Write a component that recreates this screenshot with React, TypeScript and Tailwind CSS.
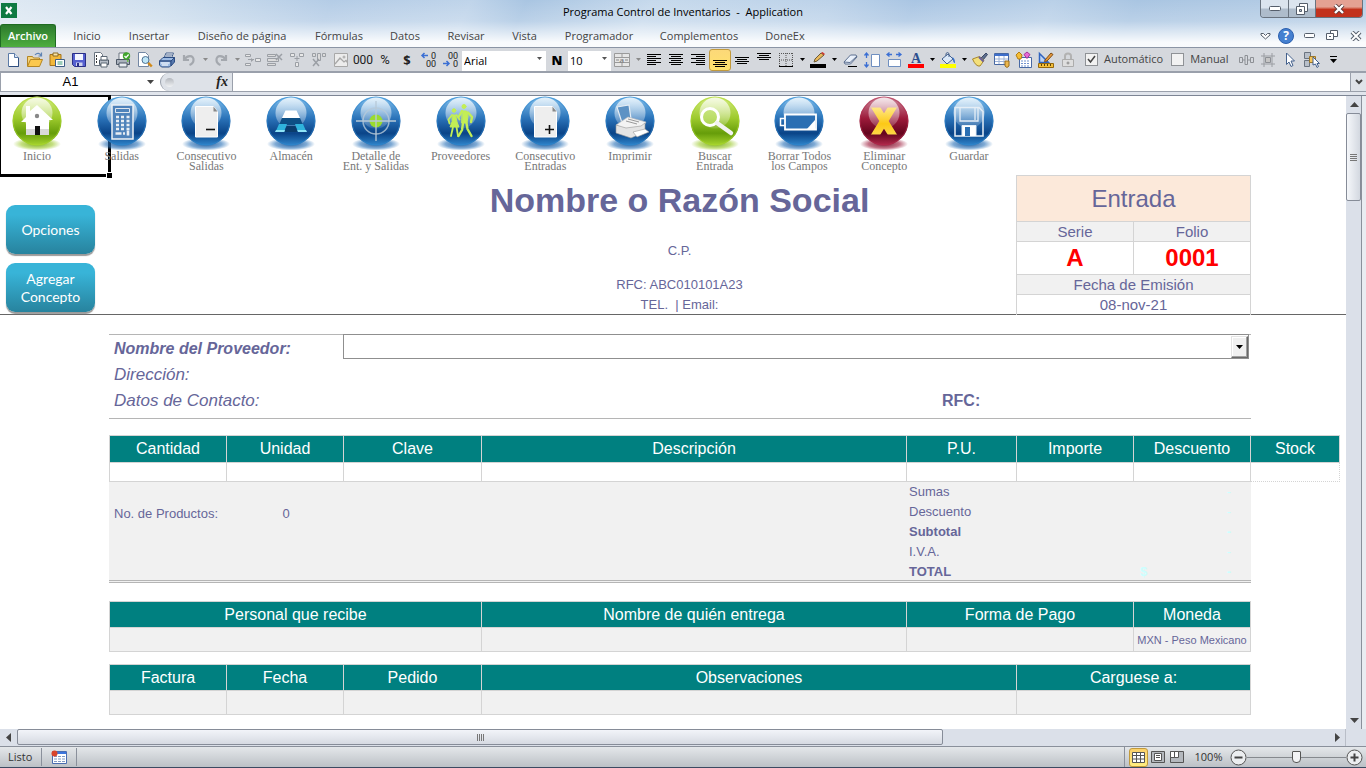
import type { ReactNode } from "react";

const TABS = [
  { label: "Inicio", width: "w-[62px]" },
  { label: "Insertar", width: "w-[62px]" },
  { label: "Diseño de página", width: "w-[124px]" },
  { label: "Fórmulas", width: "w-[70px]" },
  { label: "Datos", width: "w-[62px]" },
  { label: "Revisar", width: "w-[60px]" },
  { label: "Vista", width: "w-[57px]" },
  { label: "Programador", width: "w-[92px]" },
  { label: "Complementos", width: "w-[108px]" },
  { label: "DoneEx", width: "w-[64px]" },
];

type Tone = "blue" | "green" | "red";

const TONES: Record<Tone, { light: string; mid: string; dark: string; rim: string }> = {
  blue: { light: "#7fc0ee", mid: "#2a72b8", dark: "#0a4488", rim: "#2f86cc" },
  green: { light: "#d3ec7c", mid: "#9cc92c", dark: "#669d0a", rim: "#a8d62f" },
  red: { light: "#cf8a9d", mid: "#9c1a3a", dark: "#64041d", rim: "#b22a4c" },
};

/* ---------- Iconos de la barra ---------- */

function Icon({ children, w = 16 }: { children: ReactNode; w?: number }) {
  return (
    <svg width={w} height="16" viewBox={`0 0 ${w} 16`} fill="none" className="overflow-visible" aria-hidden="true">
      {children}
    </svg>
  );
}

function Tool({ name, active, children }: { name: string; active?: boolean; children: ReactNode }) {
  return (
    <button
      aria-label={name}
      title={name}
      className={
        active
          ? "flex h-[22px] w-[22px] items-center justify-center rounded-[3px] border border-[#c29a3c] bg-linear-to-b from-[#fcd879] to-[#ffe36c]"
          : "flex h-[22px] w-[22px] items-center justify-center"
      }
    >
      {children}
    </button>
  );
}

function Caret({ name, muted }: { name: string; muted?: boolean }) {
  return (
    <button aria-label={name} className="flex h-[22px] w-[10px] items-center justify-center">
      <svg width="5" height="3" viewBox="0 0 5 3" fill={muted ? "#8a8a8a" : "#000"} aria-hidden="true">
        <path d="M0 0h5L2.500 3z" />
      </svg>
    </button>
  );
}

function Lines({ rows, y = 1 }: { rows: number[][]; y?: number }) {
  return (
    <Icon>
      {rows.map(([x, w], i) => (
        <rect key={i} x={x} y={y + i * 2} width={w} height="1" fill="#000" shapeRendering="crispEdges" />
      ))}
    </Icon>
  );
}

const PrinterBody = () => (
  <>
    <path d="M4 7V1h8v6" fill="#fff" stroke="#6a7480" />
    <path d="M1.500 7.500h13v5h-13z" fill="#aab2bd" stroke="#4d5866" />
    <path d="M4 11h8v4H4z" fill="#e9edf2" stroke="#4d5866" />
    <path d="M12 9h1.500" stroke="#5fc02c" strokeWidth="1.500" />
  </>
);

function FileTools() {
  return (
    <div className="flex">
      <Tool name="Nuevo">
        <Icon>
          <path d="M3.500 1.500h6l4 4v9h-10z" fill="#fff" stroke="#5b7aa6" />
          <path d="M9.500 1.500v4h4" fill="#d8e4f5" stroke="#5b7aa6" />
          <path d="M13.500 6v8.500H4" stroke="#2f4f80" />
        </Icon>
      </Tool>
      <Tool name="Abrir">
        <Icon>
          <path d="M.500 14V4.500h5l1 1.500h6v2" fill="#f6d47a" stroke="#b38523" />
          <path d="M.500 14.500 3.500 7.500h12l-3 7z" fill="#fbc84d" stroke="#b38523" />
          <path d="M8 3c2-2.500 5-2 6 .5M14.500.500v3.500h-3" stroke="#5e83b3" strokeWidth="1.200" />
        </Icon>
      </Tool>
      <Tool name="Pegar">
        <Icon>
          <path d="M1 2.500h11v11H1z" fill="#f2b83b" stroke="#a4731b" />
          <path d="M4 1h5v3H4z" fill="#fbe6a9" stroke="#8b6a25" />
          <path d="M6.500 7.500h9v7h-9z" fill="#fff" stroke="#3e5d86" />
          <path d="M8.500 10h5M8.500 12h5" stroke="#3a9a76" />
        </Icon>
      </Tool>
      <Tool name="Guardar">
        <Icon>
          <path d="M1.500 1.500h13v13h-11l-2-2z" fill="#5560cf" stroke="#2a2f86" />
          <path d="M4 2h8v6H4z" fill="#f4f6ff" />
          <path d="M5 10.500h6.500V14H5z" fill="#cfd3ee" />
          <path d="M6 11h2v3H6z" fill="#2a2f86" />
        </Icon>
      </Tool>
      <Tool name="Vista previa">
        <Icon>
          <path d="M1.500.500h6l2 2v11h-8z" fill="#fff" stroke="#6a7480" />
          <path d="M3 4h2M3 7h2M3 10h2" stroke="#333" strokeDasharray="1 1" strokeWidth="2" />
          <path d="M6.500 8h9v4.500h-9z" fill="#b6bdc7" stroke="#4d5866" />
          <path d="M8 4.500h6V8H8zM8 11h6v4H8z" fill="#fff" stroke="#5c6875" />
        </Icon>
      </Tool>
      <Tool name="Impresión rápida">
        <Icon>
          <PrinterBody />
          <circle cx="11.500" cy="4" r="3.700" fill="#41a52d" />
          <path d="m9.500 4 1.500 1.600L13.600 2.500" stroke="#fff" strokeWidth="1.300" />
        </Icon>
      </Tool>
      <Tool name="Vista preliminar">
        <Icon>
          <path d="M1.500.500h7l3 3v11h-10z" fill="#fff" stroke="#7387a3" />
          <circle cx="8.500" cy="8" r="3.500" fill="#bfe6f7" stroke="#4e7193" />
          <path d="m11.200 10.800 3.600 3.700" stroke="#d18a1b" strokeWidth="2.500" />
        </Icon>
      </Tool>
      <Tool name="Imprimir">
        <Icon>
          <path d="m5 6 2-5h7.500l-2 5M7 3h6M6 5h6" fill="#fff" stroke="#44618d" />
          <path d="M.500 9 4 5.500h11.500L12 9zM.500 9H12v4.500L10.500 15h-8l-2-2z" fill="#9dbbe3" stroke="#2c4d83" />
          <path d="M2 11h8.500M3 13h6" stroke="#fff" />
          <path d="M12 9l3.500-3.500v4.500L12 14z" fill="#5678ad" stroke="#2c4d83" />
        </Icon>
      </Tool>
    </div>
  );
}

function EditTools() {
  return (
    <div className="flex items-center">
      <Tool name="Deshacer">
        <Icon>
          <path d="M3 3v5h5M3.500 7.500C6 3 13 3 12.500 8c0 2.500-1.500 4-4 5" stroke="#a4a8ae" strokeWidth="2.200" />
        </Icon>
      </Tool>
      <Caret name="Historial deshacer" muted />
      <Tool name="Rehacer">
        <Icon>
          <path d="M13 3v5H8M12.500 7.500C10 3 3 3 3.500 8c0 2.500 1.500 4 4 5" stroke="#a4a8ae" strokeWidth="2.200" />
        </Icon>
      </Tool>
      <Caret name="Historial rehacer" muted />
      <Tool name="Insertar filas">
        <Icon>
          <path d="M.500 2.500h5v2h-5zM.500 11.500h5v2h-5zM10.500 6.500h5v3h-5zM3 7.500h6" fill="#e8e8e8" stroke="#9b9fa5" />
          <path d="m6 6 2.500 2L6 10" fill="#9b9fa5" />
        </Icon>
      </Tool>
      <Tool name="Eliminar filas">
        <Icon>
          <path d="M.500 2.500h8v2h-8zM.500 11.500h8v2h-8zM.500 6.500h11v3H.500z" fill="#dcdcdc" stroke="#9b9fa5" />
          <path d="m9 2 6 6m0-6-6 6" stroke="#9b9fa5" strokeWidth="1.500" />
        </Icon>
      </Tool>
      <Tool name="Insertar columnas">
        <Icon>
          <path d="M1.500 1.500h4v3h-4zM10.500 1.500h4v3h-4zM6.500 10.500h3v4h-3z" fill="#e8e8e8" stroke="#9b9fa5" />
          <path d="M8 4v5M5.500 6.500h5" stroke="#9b9fa5" />
        </Icon>
      </Tool>
      <Tool name="Eliminar columnas">
        <Icon>
          <path d="M1.500 1.500h3v3h-3zM6.500 1.500h3v7h-3zM11.500 1.500h3v3h-3z" fill="#dcdcdc" stroke="#9b9fa5" />
          <path d="m2 7 6 7m0-7-6 7" stroke="#9b9fa5" strokeWidth="1.500" />
        </Icon>
      </Tool>
      <Tool name="Imagen">
        <Icon>
          <path d="M1.500 1.500h13v13h-13z" fill="#ececec" stroke="#a8a8a8" />
          <path d="m2 12 5-6 4 4 2-1.500 1.500 2" stroke="#a8a8a8" strokeWidth="1.300" />
          <circle cx="11" cy="5" r="1.500" fill="#b5b5b5" />
        </Icon>
      </Tool>
      <Tool name="Estilo millares">
        <span className="font-['Roboto'] text-[12px] leading-4 text-[#222]">000</span>
      </Tool>
      <Tool name="Estilo porcentual">
        <span className="font-['Roboto'] text-[13px] leading-4 text-[#222]">%</span>
      </Tool>
      <Tool name="Estilo moneda">
        <span className="font-['Open_Sans'] text-[13px] leading-4 font-bold text-[#222]">$</span>
      </Tool>
      <Tool name="Aumentar decimales">
        <Icon>
          <text x="10" y="7" fontSize="9" fill="#222" fontFamily="Roboto">0</text>
          <text x="5" y="15" fontSize="9" fill="#222" fontFamily="Roboto">00</text>
          <path d="M1 3.500h6M3.500 1 1 3.500 3.500 6" stroke="#3b6fd4" strokeWidth="1.500" />
        </Icon>
      </Tool>
      <Tool name="Disminuir decimales">
        <Icon>
          <text x="5" y="7" fontSize="9" fill="#222" fontFamily="Roboto">00</text>
          <text x="10" y="15" fontSize="9" fill="#222" fontFamily="Roboto">0</text>
          <path d="M0 11.500h6M3.500 9 6 11.500 3.500 14" stroke="#3b6fd4" strokeWidth="1.500" />
        </Icon>
      </Tool>
    </div>
  );
}

function FormatTools() {
  return (
    <div className="flex items-center">
      <div className="relative">
        <select
          aria-label="Fuente"
          className="h-5 w-[84px] appearance-none bg-white px-[2px] font-['Open_Sans'] text-[11px] text-black"
        >
          <option>Arial</option>
        </select>
        <svg className="pointer-events-none absolute top-[9px] right-1" width="5" height="3" fill="#555">
          <path d="M0 0h5L2.500 3z" />
        </svg>
      </div>
      <Tool name="Negrita">
        <span className="font-['Open_Sans'] text-[13px] leading-4 font-extrabold text-black">N</span>
      </Tool>
      <div className="relative">
        <select
          aria-label="Tamaño de fuente"
          className="h-5 w-[43px] appearance-none bg-white px-[2px] font-['Open_Sans'] text-[11px] text-black"
        >
          <option>10</option>
        </select>
        <svg className="pointer-events-none absolute top-[9px] right-1" width="5" height="3" fill="#555">
          <path d="M0 0h5L2.500 3z" />
        </svg>
      </div>
      <Tool name="Combinar y centrar">
        <Icon>
          <path d="M.500 1.500h15v13H.500zM.500 5.500h15M.500 10.500h15M8 1.500v4M8 10.500v4" fill="#e6e6e6" stroke="#9a9a9a" />
          <path d="M2 8h3M11 8h3" stroke="#8a8a8a" />
          <text x="5.500" y="11" fontSize="9" fontWeight="bold" fill="#8a8a8a" fontFamily="Liberation Serif">a</text>
        </Icon>
      </Tool>
      <Caret name="Opciones de combinar" muted />
      <Tool name="Alinear a la izquierda">
        <Lines rows={[[1, 14], [1, 9], [1, 14], [1, 9], [1, 14], [1, 9]]} y={2} />
      </Tool>
      <Tool name="Centrar">
        <Lines rows={[[1, 14], [3, 10], [1, 14], [3, 10], [1, 14], [3, 10]]} y={2} />
      </Tool>
      <Tool name="Alinear a la derecha">
        <Lines rows={[[1, 14], [6, 9], [1, 14], [6, 9], [1, 14], [6, 9]]} y={2} />
      </Tool>
      <Tool name="Alinear en la parte inferior" active>
        <Lines rows={[[1, 14], [3, 10], [1, 14], [3, 10]]} y={8} />
      </Tool>
      <Tool name="Alinear en el medio">
        <Lines rows={[[1, 14], [3, 10], [1, 14], [3, 10]]} y={5} />
      </Tool>
      <Tool name="Alinear en la parte superior">
        <Lines rows={[[1, 14], [3, 10], [1, 14], [3, 10]]} y={1} />
      </Tool>
      <Tool name="Bordes">
        <Icon>
          <path d="M1.500 1v13M8 1v13M14.500 1v13M1 1.500h14M1 8h14" stroke="#555" strokeDasharray="1 1" />
          <path d="M1 14.500h14" stroke="#000" />
        </Icon>
      </Tool>
      <Caret name="Más bordes" />
      <Tool name="Color de línea">
        <Icon>
          <path d="m4 10 1-3 6-6 3 2-7 6z" fill="#e9b95c" stroke="#6d5a36" />
          <path d="m11 1 3 2 1-1-2.500-2z" fill="#d0342c" />
          <path d="M0 12h16v4H0z" fill="#000" />
        </Icon>
      </Tool>
      <Caret name="Más colores de línea" />
      <Tool name="Borrar">
        <Icon>
          <path d="m2 10 6.500-7h5.500l1 2-6.500 7H3z" fill="#eaf1fb" stroke="#5d7090" />
          <path d="m2 10 6 .5L15 4" stroke="#5d7090" />
          <path d="M6 14.500h9" stroke="#000" />
        </Icon>
      </Tool>
      <Tool name="Alto de fila">
        <Icon>
          <path d="M7.500 2.500h8v12h-8z" fill="#fff" stroke="#6f8fc0" />
          <path d="M2.500 1v5M2.500 15v-5M.500 3.500l2-2.500 2 2.500M.500 12.500l2 2.500 2-2.500" stroke="#3b6fd4" strokeWidth="1.300" />
        </Icon>
      </Tool>
      <Tool name="Ancho de columna">
        <Icon>
          <path d="M2.500 7.500h12v7h-12z" fill="#fff" stroke="#6f8fc0" />
          <path d="M1 2.500h5M15 2.500h-5M3.500.500 1 2.500l2.500 2M12.500.500l2.500 2-2.500 2" stroke="#3b6fd4" strokeWidth="1.300" />
        </Icon>
      </Tool>
      <Tool name="Color de fuente">
        <Icon>
          <text x="3" y="11" fontSize="14" fontWeight="bold" fill="#2d4f8f" fontFamily="Liberation Serif">A</text>
          <path d="M0 12h16v4H0z" fill="#f00" />
        </Icon>
      </Tool>
      <Caret name="Más colores de fuente" />
      <Tool name="Color de relleno">
        <Icon>
          <path d="m2 7 6-5 5 5-6 5z" fill="#dce9f8" stroke="#44618d" />
          <path d="M6 4V1.500q1.500-2 3 0V5" stroke="#44618d" />
          <path d="M12 5q3 1 3 6-2 0-2-4z" fill="#2f6fd0" />
          <path d="M0 12h16v4H0z" fill="#ff0" />
        </Icon>
      </Tool>
      <Caret name="Más colores de relleno" />
      <Tool name="Copiar formato">
        <Icon>
          <path d="m9 6 5-5 1.500 1.500L11 8z" fill="#5d6d8d" stroke="#3a4a68" />
          <path d="m.500 7 7-2.500 4.500 4L8 14q-4 1-7.500-7z" fill="#f3df7a" stroke="#a8872b" />
          <path d="m7 5 4.500 4.500" stroke="#6a5f9c" strokeWidth="2" />
        </Icon>
      </Tool>
      <Tool name="Dar formato como tabla">
        <Icon>
          <path d="M.500 1.500h14v11H.500z" fill="#fff" stroke="#4768a3" />
          <path d="M.500 2h14v2H.500z" fill="#3f6fcb" />
          <path d="M1 7h13M1 9.500h13M5 4v8M10 4v8" stroke="#9db2d6" />
          <path d="M11 9h4v5l-2 1.500-2-1.500z" fill="#edb84e" stroke="#9c6f1c" />
        </Icon>
      </Tool>
      <Tool name="Estilos">
        <Icon>
          <path d="M3.500 5.500h12v10h-12z" fill="#fff" stroke="#4768a3" />
          <path d="M5 9h9M5 11.500h9M5 14h9" stroke="#6f91ce" strokeDasharray="2 1" />
          <path d="m3 0 3 3-1 4H2L0 3z" fill="#f5bd35" stroke="#b27d12" />
          <path d="m11 0 3 2.500-3 4-3-4z" fill="#e66ad6" stroke="#a8339b" />
        </Icon>
      </Tool>
      <Tool name="Modo diseño">
        <Icon>
          <path d="M1.500 1.500v9h9z" fill="#bcd3f4" stroke="#2f63c0" strokeWidth="1.500" />
          <path d="m7 8 6-7 2 1.500L9 9l-2.500.500z" fill="#e99a3c" stroke="#7d4d16" />
          <path d="M.500 11.500h15v4H.500z" fill="#f4bf3a" stroke="#94690f" />
          <path d="M3.500 12v2M6.500 12v2M9.500 12v2M12.500 12v2" stroke="#5e4307" />
        </Icon>
      </Tool>
      <Tool name="Bloquear celda">
        <Icon>
          <path d="M5 7V4q0-2.500 3-2.500T11 4v3" stroke="#b2b2b2" strokeWidth="2" />
          <path d="M2.500 7.500h11v7h-11z" fill="#dedede" stroke="#acacac" />
          <path d="M8 9.500v3M6.500 11h3" stroke="#888" />
        </Icon>
      </Tool>
    </div>
  );
}

function Toolbar() {
  return (
    <div className="flex h-[26px] items-center overflow-hidden border-t border-b-2 border-t-[#8b95a5] border-b-[#9aa0ab] bg-[#d5d8dd] px-[2px]">
      <FileTools />
      <EditTools />
      <FormatTools />
      <div className="ml-[6px] flex items-center gap-[8px] font-['Open_Sans'] text-[11px] text-[#444]">
        <label className="flex items-center gap-[6px]">
          <input
            type="checkbox"
            defaultChecked
            className="peer h-[13px] w-[13px] appearance-none border border-[#8f9296] bg-[#f2f2f2] checked:bg-[url('data:image/svg+xml,%3Csvg%20xmlns=%22http://www.w3.org/2000/svg%22%20viewBox=%220%200%2011%2011%22%3E%3Cpath%20d=%22M2%205l2.500%203L9%202%22%20fill=%22none%22%20stroke=%22%23444%22%20stroke-width=%221.500%22/%3E%3C/svg%3E')]"
          />
          Automático
        </label>
        <label className="flex items-center gap-[6px]">
          <input type="checkbox" className="h-[13px] w-[13px] appearance-none border border-[#8f9296] bg-[#f2f2f2]" />
          Manual
        </label>
      </div>
      <div className="ml-[6px] flex items-center">
        <Tool name="Distribuir">
          <Icon>
            <path d="M1.500 5.500h3v5h-3zM7 3.500h2.500v9H7zM12.500 5.500h3v5h-3zM4.500 8H7M10 8h2.500" stroke="#8d9095" />
          </Icon>
        </Tool>
        <Tool name="Recortar">
          <Icon>
            <path d="M4 1v14M12 1v14M1 4h14M1 12h14" stroke="#9a9da2" />
            <path d="M5.500 5.500h5v5h-5z" fill="#c5c5c5" stroke="#8d9095" />
          </Icon>
        </Tool>
        <Tool name="Seleccionar">
          <Icon>
            <path d="m4.500 1 8 8H9l2 4.500-2 1L7 10l-2.500 2.500z" fill="#fff" stroke="#44618d" />
          </Icon>
        </Tool>
        <Tool name="Panel de selección">
          <Icon>
            <path d="M.500.500h6v6h-6zM.500 8.500h5v6h-5z" fill="#b9c0c9" stroke="#6b7480" />
            <path d="M5.500 4.500h6v6h-6z" fill="#f5c45b" stroke="#9d7727" />
            <path d="m9 5 6.500 6.500H13l1.500 3-1.500 1-1.500-3.500L9 13z" fill="#fff" stroke="#44618d" />
          </Icon>
        </Tool>
        <Tool name="Personalizar">
          <svg width="7" height="8" viewBox="0 0 7 8" aria-hidden="true">
            <path d="M0 0h7v1H0zM0 3h7L3.500 7z" />
          </svg>
        </Tool>
      </div>
    </div>
  );
}

/* ---------- Ventana ---------- */

function TitleBar() {
  return (
    <header className="relative bg-[linear-gradient(to_bottom,rgba(255,255,255,0)_0%,rgba(255,255,255,.2)_45%,rgba(255,255,255,.92)_90%),linear-gradient(115deg,#dfe9f3_0%,#cfdfee_12%,#b4cce6_24%,#bfd4ea_34%,#a9c5e2_38%,#c6d9ec_47%,#bcd2e9_60%,#a9c5e3_66%,#b9d0e8_76%,#a9c5e2_82%,#b9cfe6_100%)]">
      <div className="relative flex h-6 items-center justify-center">
        <svg className="absolute top-[3px] left-px" width="16" height="15" viewBox="0 0 16 15" aria-hidden="true">
          <path d="M0 0h16v15H0z" fill="#0f7a42" />
          <path d="m5 4 5.500 7M10.500 4 5 11" stroke="#fff" strokeWidth="2.200" />
        </svg>
        <h1 className="font-['Open_Sans'] text-[11px] leading-4 whitespace-pre text-black">
          Programa Control de Inventarios  -  Application
        </h1>
        <div className="absolute top-0 right-[3px] flex h-[18px] overflow-hidden rounded-b-[4px] border border-t-0 border-[#69737f]">
          <button aria-label="Minimizar" className="flex w-7 items-center justify-center border-r border-[#69737f] bg-linear-to-b from-[#dbe4ee] from-45% to-[#aebccb] to-55%">
            <svg width="12" height="5" aria-hidden="true">
              <rect x=".5" y=".5" width="11" height="4" rx="1" fill="#fff" stroke="#555e6b" />
            </svg>
          </button>
          <button aria-label="Restaurar" className="flex w-[27px] items-center justify-center border-r border-[#69737f] bg-linear-to-b from-[#dbe4ee] from-45% to-[#aebccb] to-55%">
            <svg width="13" height="12" fill="#fff" stroke="#555e6b" aria-hidden="true">
              <path d="M3.500.500h8v8h-8z" />
              <path d="M.500 3.500h8v8h-8z" />
              <path d="M3.500 6.500h2v2h-2z" fill="#b9c4d0" />
            </svg>
          </button>
          <button aria-label="Cerrar" className="flex w-[46px] items-center justify-center bg-linear-to-b from-[#e4a193] from-40% to-[#c2321d] to-55%">
            <svg width="12" height="10" aria-hidden="true">
              <path d="m2 1 8 8M10 1 2 9" stroke="#5a3a3a" strokeWidth="4" />
              <path d="m2 1 8 8M10 1 2 9" stroke="#fff" strokeWidth="2.400" />
            </svg>
          </button>
        </div>
      </div>
      <nav className="flex h-[23px] items-stretch font-['Open_Sans'] text-[11px] text-[#444]">
        <button className="w-14 rounded-t-[3px] border border-b-0 border-[#1f6b22] bg-linear-to-b from-[#2c7a2d] to-[#4fae3f] font-semibold text-white">
          Archivo
        </button>
        {TABS.map((tab) => (
          <button key={tab.label} className={`${tab.width} pt-[2px] whitespace-nowrap`}>
            {tab.label}
          </button>
        ))}
        <div className="ml-auto flex items-center gap-[7px] pr-1">
          <button aria-label="Minimizar la cinta">
            <svg width="11" height="8" aria-hidden="true">
              <path d="M1 1.500h2.500l2 2 2-2H10v1.500L5.500 7 1 3z" fill="#fff" stroke="#555e6b" />
            </svg>
          </button>
          <button aria-label="Ayuda" className="h-4 w-4 rounded-full border border-[#2b5fae] bg-[#4580d0] text-[12px] leading-[14px] font-bold text-white">
            ?
          </button>
          <button aria-label="Minimizar libro" className="w-[18px] pl-[3px]">
            <svg width="12" height="6" aria-hidden="true">
              <rect x=".5" y=".5" width="10" height="4" rx="1" fill="#fff" stroke="#555e6b" />
            </svg>
          </button>
          <button aria-label="Restaurar libro">
            <svg width="13" height="11" fill="#fff" stroke="#555e6b" aria-hidden="true">
              <path d="M4.500.500h7v6h-7z" />
              <path d="M.500 3.500h7v6h-7z" />
              <path d="M3 6.500h2" />
            </svg>
          </button>
          <button aria-label="Cerrar libro" className="pl-1">
            <svg width="12" height="10" aria-hidden="true">
              <path d="m2 1 8 8M10 1 2 9" stroke="#555e6b" strokeWidth="4" />
              <path d="m2 1 8 8M10 1 2 9" stroke="#fff" strokeWidth="2" />
            </svg>
          </button>
        </div>
      </nav>
    </header>
  );
}

function FormulaBar() {
  return (
    <div className="border-b border-[#7d8594] bg-[#e1e5ec] pb-[3px]">
      <div className="flex h-[19px] border-b border-[#9aa0ab] bg-white">
        <div className="flex w-40 items-center border-l border-[#9aa0ab] pr-[6px]">
          <input
            aria-label="Cuadro de nombres"
            defaultValue="A1"
            className="w-[139px] bg-transparent text-center text-[13px] leading-4 text-black outline-none"
          />
          <svg className="ml-auto" width="7" height="4" fill="#444" aria-hidden="true">
            <path d="M0 0h7L3.500 4z" />
          </svg>
        </div>
        <div className="flex w-[73px] items-center justify-between rounded-l-[9px] border-r border-l border-[#9aa0ab] bg-[#dee2e8] px-1">
          <span className="h-[9px] w-[9px] rounded-full bg-linear-to-b from-[#b4b8be] to-[#f0f2f4]" />
          <button aria-label="Insertar función" className="font-['Liberation_Serif'] text-[14px] leading-4 font-bold text-[#222] italic">
            fx
          </button>
        </div>
        <input aria-label="Barra de fórmulas" className="min-w-0 flex-1 px-1 text-[13px] outline-none" />
        <button aria-label="Expandir barra de fórmulas" className="flex w-4 items-center justify-center border-l border-[#9aa0ab] bg-[#dfe3e9]">
          <svg width="8" height="6" fill="none" stroke="#444" strokeWidth="2" aria-hidden="true">
            <path d="m1 1 3 3 3-3" />
          </svg>
        </button>
      </div>
    </div>
  );
}

/* ---------- Botones esfera ---------- */

function Orb({ tone, children }: { tone: Tone; children: ReactNode }) {
  const c = TONES[tone];
  return (
    <svg width="62" height="55" viewBox="0 0 62 55" fill="none" aria-hidden="true">
      <defs>
        <linearGradient id={`body-${tone}`} x1="0" y1="0" x2="0" y2="1">
          <stop offset="0" stopColor={c.light} />
          <stop offset=".45" stopColor={c.mid} />
          <stop offset=".75" stopColor={c.dark} />
          <stop offset="1" stopColor={c.rim} />
        </linearGradient>
        <linearGradient id={`gloss-${tone}`} x1="0" y1="0" x2="0" y2="1">
          <stop offset="0" stopColor="#fff" stopOpacity=".8" />
          <stop offset="1" stopColor="#fff" stopOpacity=".12" />
        </linearGradient>
        <radialGradient id={`shade-${tone}`}>
          <stop offset="0" stopColor={c.dark} stopOpacity=".9" />
          <stop offset=".65" stopColor={c.mid} stopOpacity=".6" />
          <stop offset="1" stopColor={c.mid} stopOpacity="0" />
        </radialGradient>
      </defs>
      <ellipse cx="31" cy="48" rx="24" ry="6.500" fill={`url(#shade-${tone})`} />
      <circle cx="31" cy="25" r="24.500" fill={`url(#body-${tone})`} />
      <circle cx="31" cy="25" r="23.800" stroke={c.rim} strokeOpacity=".6" />
      <circle cx="31" cy="17" r="15.500" fill={`url(#gloss-${tone})`} />
      {children}
    </svg>
  );
}

const Sheet = ({ children }: { children: ReactNode }) => (
  <>
    <path d="M20.500 10.500h18l4 5v25.500h-22z" fill="#eee" stroke="#fff" />
    <path d="M38.500 10.500v5h4z" fill="#888" />
    {children}
  </>
);

const ORBS: { label: string; tone: Tone; art: ReactNode }[] = [
  {
    label: "Inicio",
    tone: "green",
    art: (
      <>
        <path d="M20 10h4v5l7-6 16 15h-4v15H20V26h-5l5-5z" fill="#fff" />
        <path d="M20 33h23v6H20z" fill="#d9d9d9" />
        <path d="M29 30h5v9h-5z" fill="#111" />
        <circle cx="31" cy="20" r="2.200" fill="#888" />
      </>
    ),
  },
  {
    label: "Salidas",
    tone: "blue",
    art: (
      <>
        <path d="M21 9h21v34H21z" fill="#4f83bb" stroke="#eef2f6" strokeWidth="1.500" />
        <path d="M24.500 12.500h14v4h-14z" stroke="#dfe6ee" />
        <path d="M25 21h3M30 21h3M35.500 21h3M25 25h3M30 25h3M35.500 25h3M25 29h3M30 29h3M35.500 29h3M25 33h3M30 33h3M35.500 33h3M24.500 37.500h6M32 37.500h2" stroke="#e9eef4" strokeWidth="2.600" />
        <path d="M37 34.500v5" stroke="#e9eef4" strokeWidth="2.600" />
      </>
    ),
  },
  {
    label: "Consecutivo\nSalidas",
    tone: "blue",
    art: (
      <Sheet>
        <path d="M31 33.500h9" stroke="#111" strokeWidth="1.600" />
      </Sheet>
    ),
  },
  {
    label: "Almacén",
    tone: "blue",
    art: (
      <>
        <path d="M25.500 14.500h11l3.500 7.500H22z" fill="#fff" />
        <path d="M22 22h18l3 7H19z" fill="#0d4f85" />
        <path d="M19 28h8l-3 8h-8.500zM35 28h8l3.500 8H38z" fill="#2fb3dc" />
        <path d="M26.500 30h9l2 6h-13z" fill="#0a3c6c" />
        <path d="M16 34h9l-.700 2h-9.300zM37.300 34h8.700l1 2h-9z" fill="#8fe3f6" />
      </>
    ),
  },
  {
    label: "Detalle de\nEnt. y Salidas",
    tone: "blue",
    art: (
      <>
        <circle cx="31" cy="25" r="6.500" fill="#9adb2e" />
        <circle cx="31" cy="25" r="13" stroke="#b7c9d8" strokeOpacity=".8" strokeWidth="1.500" />
        <path d="M31 5v40M11 25h40" stroke="#b7c9d8" strokeWidth="1.300" />
      </>
    ),
  },
  {
    label: "Proveedores",
    tone: "blue",
    art: (
      <g fill="#c3ee55" stroke="#c3ee55" strokeLinejoin="round" strokeLinecap="round">
        <circle cx="24" cy="14.500" r="1.800" />
        <circle cx="34" cy="10.500" r="2" />
        <path d="m22.500 19 3 0 1.500 7 2 5h-9l2-5z" />
        <path d="m22 19-3.500 4.500 1 4M26.500 19l3 4.500M23 31l-2 9M26.500 31l1.500 9" fill="none" strokeWidth="1.800" />
        <path d="m32.500 15 4 0 1.500 5-1 7h-5z" />
        <path d="m32 15-3.500 6M38 16.500l4 4.500-1 5M33 27l-1 7-3.500 6M36.500 27l1 6 4 7" fill="none" strokeWidth="2.400" />
      </g>
    ),
  },
  {
    label: "Consecutivo\nEntradas",
    tone: "blue",
    art: (
      <Sheet>
        <path d="M31 33.500h9M35.500 29v9" stroke="#111" strokeWidth="1.600" />
      </Sheet>
    ),
  },
  {
    label: "Imprimir",
    tone: "blue",
    art: (
      <>
        <path d="m18 11 12-2 2 14-9 4z" fill="#5d92c4" stroke="#e6edf4" strokeWidth="1.200" />
        <path d="m17 29 12-8 18 5-5 9-18-3z" fill="#f3f3f3" stroke="#bbb" strokeWidth=".6" />
        <path d="m17 29 10 3 15-2 4-3v9l-14 6-15-5z" fill="#e4e4e4" stroke="#999" strokeWidth=".6" />
        <path d="m29 23 11 3M27 25l11 3" stroke="#999" />
        <path d="m34 36 12-3 4 3-12 5z" fill="#fff" stroke="#999" strokeWidth=".6" />
      </>
    ),
  },
  {
    label: "Buscar\nEntrada",
    tone: "green",
    art: (
      <>
        <circle cx="26" cy="21" r="8.500" fill="#b7dd5c" fillOpacity=".6" stroke="#fff" strokeWidth="3" />
        <path d="m33 27 14 10" stroke="#f2f2f2" strokeWidth="4.500" strokeLinecap="round" />
      </>
    ),
  },
  {
    label: "Borrar Todos\nlos Campos",
    tone: "blue",
    art: (
      <>
        <path d="M17 18.500h31v15H17z" fill="#2b6fb3" stroke="#fff" strokeWidth="1.800" />
        <path d="M16.500 22.500h-4v7h4" stroke="#fff" strokeWidth="1.500" />
        <path d="M47 24v9h-8z" fill="#fff" />
      </>
    ),
  },
  {
    label: "Eliminar\nConcepto",
    tone: "red",
    art: (
      <>
        <defs>
          <clipPath id="cross-clip">
            <path d="M14 11.500h34v27H14z" />
          </clipPath>
          <linearGradient id="cross-fill" gradientUnits="userSpaceOnUse" x1="0" y1="11" x2="0" y2="39">
            <stop offset="0" stopColor="#ffe98a" />
            <stop offset=".6" stopColor="#fcc916" />
            <stop offset="1" stopColor="#fdd74a" />
          </linearGradient>
        </defs>
        <path d="m20 7 22 36M42 7 20 43" stroke="url(#cross-fill)" strokeWidth="8" clipPath="url(#cross-clip)" />
      </>
    ),
  },
  {
    label: "Guardar",
    tone: "blue",
    art: (
      <>
        <path d="M17 11.500h24l4 4V40H17z" stroke="#e6eef6" strokeWidth="1.500" />
        <path d="M22 12v13h18V12M37 12v12" stroke="#e6eef6" strokeWidth="1.300" />
        <path d="M24 40V29.500h14V40" fill="#fff" stroke="#e6eef6" />
        <path d="M27 31h5v9h-5z" fill="#2b6fb3" />
      </>
    ),
  },
];

function OrbMenu() {
  return (
    <div className="relative h-[79px]">
      {/* Celda A1 seleccionada, queda por debajo de los botones */}
      <div className="absolute top-[-1px] left-0 h-[82px] w-[111px] border-2 border-r-3 border-b-3 border-l-1 border-black">
        <span className="absolute -right-[4px] -bottom-[4px] h-[6px] w-[6px] border-t border-l border-white bg-black" />
      </div>
      <div className="relative flex w-[1006px] justify-between">
        {ORBS.map((orb) => (
          <button
            key={orb.label}
            className="flex w-[74px] flex-col items-center font-['Liberation_Serif'] text-[12px] leading-[10px] whitespace-pre text-[#777]"
          >
            <Orb tone={orb.tone}>{orb.art}</Orb>
            {orb.label}
          </button>
        ))}
      </div>
    </div>
  );
}

/* ---------- Hoja ---------- */

const SIDE_BUTTON =
  "flex h-[49px] w-[89px] items-center justify-center rounded-[9px] bg-linear-to-b from-[#38b4d8] from-20% to-[#27839e] px-2 text-center text-[14px] leading-[18px] text-white shadow-[0_2px_1px_#9a9a9a]";

function DocumentHeader() {
  return (
    <section className="grid h-[139px] grid-cols-[109px_234px_minmax(0,1fr)_235px_95px]">
      <div className="flex flex-col gap-[9px] pt-[30px] pl-[6px] font-['Lato','Open_Sans']">
        <button className={SIDE_BUTTON}>Opciones</button>
        <button className={SIDE_BUTTON}>Agregar Concepto</button>
      </div>
      <div className="col-start-3 text-center text-[13px] leading-5">
        <h2 className="text-[34px] leading-[50px] font-bold">Nombre o Razón Social</h2>
        <p className="mt-4">C.P.</p>
        <p className="mt-[14px]">RFC: ABC010101A23</p>
        <p className="whitespace-pre">TEL.  | Email:</p>
      </div>
      <table className="h-[139px] w-full table-fixed border-collapse text-center text-[15px] leading-[18px] [&_td]:border [&_td]:border-[#d4d4d4] [&_td]:p-0 [&_th]:border [&_th]:border-[#d4d4d4] [&_th]:p-0 [&_th]:font-normal">
        <tbody>
          <tr className="h-[46px] bg-[#fce9da]">
            <th colSpan={2} className="text-[24px]">Entrada</th>
          </tr>
          <tr className="h-5 bg-[#f1f1f1]">
            <th>Serie</th>
            <th>Folio</th>
          </tr>
          <tr className="h-[33px] text-[24px] font-bold text-[#ff0000]">
            <td>A</td>
            <td>0001</td>
          </tr>
          <tr className="h-5 bg-[#f1f1f1]">
            <th colSpan={2}>Fecha de Emisión</th>
          </tr>
          <tr className="h-5">
            <td colSpan={2} className="border-b-0!">08-nov-21</td>
          </tr>
        </tbody>
      </table>
    </section>
  );
}

function Supplier() {
  return (
    <section className="mt-[19px] mr-[95px] ml-[109px] h-[85px] border-y border-[#b5b5b5] pt-px text-[17px] leading-[26px] italic">
      <div className="flex">
        <label htmlFor="proveedor" className="w-[234px] pl-[5px] text-[16px] font-bold">
          Nombre del Proveedor:
        </label>
        <div className="relative -mt-[2px] mr-[2px] h-[25px] flex-1">
          <select id="proveedor" className="h-full w-full appearance-none border border-[#8f8f8f] bg-white px-1">
            <option></option>
          </select>
          <span className="pointer-events-none absolute top-[2px] right-px flex h-[22px] w-[17px] items-center justify-center border border-t-[#e3e3e3] border-r-[#696969] border-b-[#696969] border-l-[#e3e3e3] bg-[#f0f0f0] shadow-[inset_-1px_-1px_0_#a0a0a0,inset_1px_1px_0_#fff]">
            <svg width="7" height="4">
              <path d="M0 0h7L3.500 4z" />
            </svg>
          </span>
        </div>
      </div>
      <p className="pl-[5px]">Dirección:</p>
      <div className="flex">
        <p className="flex-1 pl-[5px]">Datos de Contacto:</p>
        <p className="w-[309px] text-[16px] font-bold not-italic">RFC:</p>
      </div>
    </section>
  );
}

const TABLE =
  "w-full table-fixed border-collapse text-center text-[16px] leading-5 [&_td]:border [&_td]:border-[#d4d4d4] [&_td]:p-0 [&_th]:border [&_th]:border-[#d4d4d4] [&_th]:bg-[#008080] [&_th]:p-0 [&_th]:font-normal [&_th]:text-white";

const TOTALS = [
  { label: "Sumas", strong: false },
  { label: "Descuento", strong: false },
  { label: "Subtotal", strong: true },
  { label: "I.V.A.", strong: false },
  { label: "TOTAL", strong: true },
];

function Items() {
  return (
    <>
      <div className="mt-4 mr-[6px] ml-[109px]">
        <table className={TABLE}>
          <colgroup>
            <col className="w-[117px]" />
            <col className="w-[117px]" />
            <col className="w-[138px]" />
            <col />
            <col className="w-[110px]" />
            <col className="w-[117px]" />
            <col className="w-[117px]" />
            <col className="w-[89px]" />
          </colgroup>
          <thead>
            <tr className="h-[27px]">
              {["Cantidad", "Unidad", "Clave", "Descripción", "P.U.", "Importe", "Descuento", "Stock"].map((h) => (
                <th key={h}>{h}</th>
              ))}
            </tr>
          </thead>
          <tbody>
            <tr className="h-[19px]">
              <td />
              <td />
              <td />
              <td />
              <td />
              <td />
              <td />
              <td className="[border-style:solid_dotted_dotted_solid]!" />
            </tr>
          </tbody>
        </table>
      </div>
      <div className="mr-[95px] ml-[109px] flex h-[101px] justify-between border-b-3 border-double border-[#b5b5b5] bg-[#f1f1f1] text-[13px] leading-5">
        <dl className="flex pt-[22px] pl-[5px]">
          <dt className="w-[163px]">No. de Productos:</dt>
          <dd className="w-[18px] text-center">0</dd>
        </dl>
        <dl className="w-[344px] pl-[2px]">
          {TOTALS.map((t) => (
            <div key={t.label} className={t.strong ? "flex font-bold" : "flex"}>
              <dt className="w-[231px]">{t.label}</dt>
              <dd className="flex flex-1 justify-between pr-5 text-[#ccffff]">
                <span>{t.label === "TOTAL" ? "$" : ""}</span>
                <span>-</span>
              </dd>
            </div>
          ))}
        </dl>
      </div>
    </>
  );
}

function Footer() {
  return (
    <div className="mt-[18px] mr-[95px] ml-[109px] flex flex-col gap-3">
      <table className={TABLE}>
        <colgroup>
          <col className="w-[372px]" />
          <col />
          <col className="w-[227px]" />
          <col className="w-[117px]" />
        </colgroup>
        <thead>
          <tr className="h-[26px]">
            <th>Personal que recibe</th>
            <th>Nombre de quién entrega</th>
            <th>Forma de Pago</th>
            <th>Moneda</th>
          </tr>
        </thead>
        <tbody>
          <tr className="h-6 bg-[#f1f1f1]">
            <td />
            <td />
            <td />
            <td className="text-[11px] whitespace-nowrap">MXN - Peso Mexicano</td>
          </tr>
        </tbody>
      </table>
      <table className={TABLE}>
        <colgroup>
          <col className="w-[117px]" />
          <col className="w-[117px]" />
          <col className="w-[138px]" />
          <col />
          <col className="w-[234px]" />
        </colgroup>
        <thead>
          <tr className="h-[26px]">
            <th>Factura</th>
            <th>Fecha</th>
            <th>Pedido</th>
            <th>Observaciones</th>
            <th>Carguese a:</th>
          </tr>
        </thead>
        <tbody>
          <tr className="h-6 bg-[#f1f1f1]">
            <td />
            <td />
            <td />
            <td />
            <td />
          </tr>
        </tbody>
      </table>
    </div>
  );
}

function VerticalScroll() {
  return (
    <div className="flex w-5 flex-col items-stretch border-r-4 border-[#e9ecf1] bg-[#dbe0e9] shadow-[inset_-1px_0_0_#8a909b]">
      <button aria-label="Desplazar arriba" className="flex h-[17px] items-center justify-center">
        <svg width="9" height="5" fill="#444">
          <path d="M0 5h9L4.500 0z" />
        </svg>
      </button>
      <div className="flex h-[88px] w-[15px] flex-col items-center justify-center gap-px rounded-[2px] border border-[#868c98] bg-linear-to-r from-[#f5f7fa] to-[#d3d8e0]">
        <span className="h-px w-[7px] bg-[#777]" />
        <span className="h-px w-[7px] bg-[#777]" />
        <span className="h-px w-[7px] bg-[#777]" />
        <span className="h-px w-[7px] bg-[#777]" />
      </div>
      <button aria-label="Desplazar abajo" className="mt-auto flex h-[17px] items-center justify-center">
        <svg width="9" height="5" fill="#444">
          <path d="M0 0h9L4.500 5z" />
        </svg>
      </button>
    </div>
  );
}

function HorizontalScroll() {
  return (
    <div className="flex h-[17px] bg-[#dbe0e9] pr-5">
      <button aria-label="Desplazar a la izquierda" className="flex w-[17px] items-center justify-center">
        <svg width="5" height="9" fill="#444">
          <path d="M5 0v9L0 4.500z" />
        </svg>
      </button>
      <div className="flex h-4 w-[926px] items-center justify-center gap-px rounded-[2px] border border-[#868c98] bg-linear-to-b from-[#f2f4f9] to-[#d6dae2]">
        <span className="h-[7px] w-px bg-[#777]" />
        <span className="h-[7px] w-px bg-[#777]" />
        <span className="h-[7px] w-px bg-[#777]" />
        <span className="h-[7px] w-px bg-[#777]" />
      </div>
      <button aria-label="Desplazar a la derecha" className="ml-auto flex w-[17px] items-center justify-center border-r border-[#b9bec8]">
        <svg width="5" height="9" fill="#444">
          <path d="M0 0v9l5-4.500z" />
        </svg>
      </button>
    </div>
  );
}

function StatusBar() {
  return (
    <footer className="flex h-[22px] items-center border-t border-b border-t-[#8a909b] border-b-[#3c4a61] bg-linear-to-b from-[#e4e7ea] to-[#bcc1c6] font-['Open_Sans'] text-[11px] text-[#333]">
      <span className="w-[41px] pl-2">Listo</span>
      <span className="h-[18px] w-px bg-[#8a909b]" />
      <button aria-label="Grabar macro" className="flex w-[34px] justify-center">
        <svg width="16" height="14" viewBox="0 0 16 14">
          <path d="M1.500 1.500h14v12h-14z" fill="#fff" stroke="#4a6db0" />
          <path d="M2 2h13v2H2z" fill="#3c75dd" />
          <path d="M3 6.500h11M3 9h11M3 11.500h11" stroke="#8099c4" strokeDasharray="3 1" />
          <circle cx="3.500" cy="3.500" r="3" fill="#d9442b" />
        </svg>
      </button>
      <span className="h-[18px] w-px bg-[#8a909b]" />
      <div className="ml-auto flex h-full items-center border-l border-[#8a909b] pl-1">
        <button aria-label="Normal" className="flex h-[19px] w-[19px] items-center justify-center rounded-[3px] border border-[#c29a3c] bg-linear-to-b from-[#fbd06a] to-[#ffee80]">
          <svg width="13" height="11" fill="#fff" stroke="#555">
            <path d="M.500.500h12v10H.500zM.500 3.500h12M.500 7h12M4.500.500v10M8.500.500v10" />
          </svg>
        </button>
        <button aria-label="Diseño de página" className="flex w-[19px] justify-center">
          <svg width="14" height="12" fill="#b4b8bd" stroke="#555">
            <path d="M.500.500h13v11H.500z" />
            <path d="M3.500 2.500h7v7h-7z" fill="#fff" />
            <path d="M5 4.500h4M5 6.500h4" />
          </svg>
        </button>
        <button aria-label="Vista previa de salto de página" className="flex w-[19px] justify-center">
          <svg width="14" height="12" fill="#b4b8bd" stroke="#555">
            <path d="M.500.500h13v11H.500z" />
            <path d="M.500.500h4v6h-4zM4.500.500h4v6h-4z" fill="#fff" />
          </svg>
        </button>
        <button className="w-[42px] pl-[3px]">100%</button>
        <button aria-label="Alejar" className="ml-[2px]">
          <svg width="17" height="17">
            <circle cx="8.500" cy="8.500" r="7.500" fill="#eceef0" stroke="#555" />
            <path d="M4.500 8.500h8" stroke="#444" strokeWidth="2" />
          </svg>
        </button>
        <input
          type="range"
          aria-label="Zoom"
          min={10}
          max={190}
          defaultValue={100}
          className="h-4 w-[99px] appearance-none bg-[linear-gradient(#85898e,#85898e)] bg-[length:100%_1px] bg-center bg-no-repeat [&::-webkit-slider-thumb]:h-3 [&::-webkit-slider-thumb]:w-[9px] [&::-webkit-slider-thumb]:appearance-none [&::-webkit-slider-thumb]:rounded-t-[1px] [&::-webkit-slider-thumb]:rounded-b-[4px] [&::-webkit-slider-thumb]:border [&::-webkit-slider-thumb]:border-[#555] [&::-webkit-slider-thumb]:bg-[#f2f3f5]"
        />
        <button aria-label="Acercar" className="mr-[3px]">
          <svg width="17" height="17">
            <circle cx="8.500" cy="8.500" r="7.500" fill="#eceef0" stroke="#555" />
            <path d="M4.500 8.500h8M8.500 4.500v8" stroke="#444" strokeWidth="2" />
          </svg>
        </button>
      </div>
    </footer>
  );
}

export default function App() {
  return (
    <div className="flex min-h-screen flex-col bg-white font-['Liberation_Sans',Arial,sans-serif] text-[#666699]">
      <TitleBar />
      <Toolbar />
      <FormulaBar />
      <div className="flex flex-1">
        <main className="min-w-0 flex-1">
          <div className="border-b border-[#666]">
            <OrbMenu />
            <DocumentHeader />
          </div>
          <Supplier />
          <Items />
          <Footer />
        </main>
        <VerticalScroll />
      </div>
      <HorizontalScroll />
      <StatusBar />
    </div>
  );
}
